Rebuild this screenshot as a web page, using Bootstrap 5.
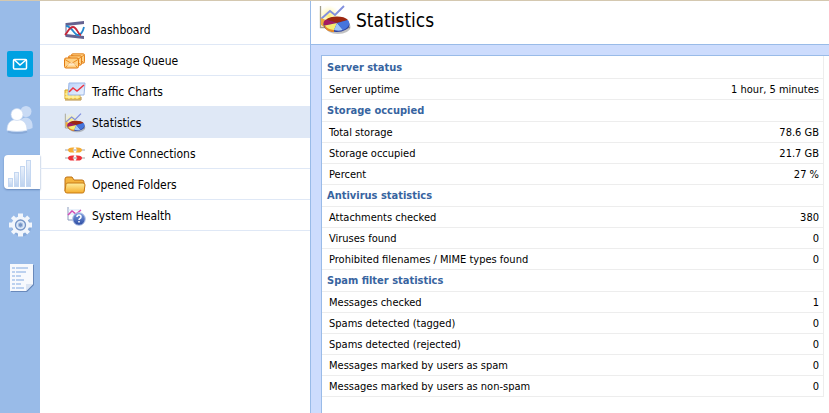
<!DOCTYPE html>
<html lang="en">
<head>
<meta charset="utf-8">
<meta name="viewport" content="width=device-width, initial-scale=1">
<title>Statistics</title>
<link href="https://cdn.jsdelivr.net/npm/bootstrap@5.3.0/dist/css/bootstrap.min.css" rel="stylesheet">
<style>
body{font-family:"DejaVu Sans Condensed","DejaVu Sans",Tahoma,sans-serif;font-stretch:condensed;font-size:12px;color:#000;background:#fff}
.app{border-top:1px solid #d4c8b0}
.rail{width:40px;background:#99bbe8;padding-top:46px}
.rail-btn{height:34px;margin-bottom:20px;border:0;border-radius:4px 0 0 4px;background:none;padding:0;width:36px}
.rail-btn.active{background:#fff;box-shadow:0 1px 2px #6688bb}
.side{width:270px;padding-top:13px}
.side .nav-link{height:31px;padding:2px 0 0 24px;gap:6px;color:#000;border-bottom:1px solid #dfe8f6}
.side .nav-link.active{background:#dfe8f6}
.main-pane{border-left:1px solid #99bbe8;background:#cddcfd}
.title-bar{height:44px;border-bottom:1px solid #99bbe8;padding:0 0 5px 8px;gap:5px}
.title-bar h1{font-size:19px;line-height:24px}
.panel-box{margin:10px 0 0 10px;border:solid #99bbe8;border-width:1px 0 0 1px;padding-right:5px}
.stats{font-size:11px;line-height:14px;border-right:1px solid #ededed}
.stats th,.stats td{height:21px;padding:2px 4px 0 7px;border-bottom:1px solid #ededed;font-weight:400;vertical-align:middle}
.stats .group th{height:22px;padding:2px 0 0 5px;color:#3764a0;font-weight:700}
</style>
<script src="https://cdn.jsdelivr.net/npm/bootstrap@5.3.0/dist/js/bootstrap.bundle.min.js"></script>
</head>
<body>
<svg width="0" height="0" class="position-absolute" aria-hidden="true">
<defs>
<linearGradient id="gold" x2="0" y2="1"><stop stop-color="#fff0a0"/><stop offset="1" stop-color="#f5ad2c"/></linearGradient>
<linearGradient id="bars" x2="0" y2="1"><stop stop-color="#eaf1fb"/><stop offset="1" stop-color="#bdd2ef"/></linearGradient>
<linearGradient id="sheet" x2="1" y2="1"><stop stop-color="#b9d2fa"/><stop offset="1" stop-color="#edf4ff"/></linearGradient>
<linearGradient id="orb" x2="0" y2="1"><stop stop-color="#7c9de0"/><stop offset="1" stop-color="#2b4aa0"/></linearGradient>
<radialGradient id="glow"><stop stop-color="#ffee70"/><stop offset="1" stop-color="#fff7c0" stop-opacity="0"/></radialGradient>
<symbol id="pie" viewBox="0 0 32 30">
<ellipse cx="10" cy="11" rx="11" ry="11" fill="url(#glow)"/>
<path d="M1.500 1v21.500H31" fill="none" stroke="#a3a08c" stroke-width="1.300"/>
<path d="M2 14l9-8 5 4 9-9" fill="none" stroke="#8290de" stroke-width="1.900"/>
<path d="M2 13l5 2 2 10-7-5z" fill="#efab3c"/>
<ellipse cx="19" cy="22" rx="12.500" ry="7" fill="#777" opacity=".45"/>
<ellipse cx="17.500" cy="19.500" rx="13" ry="7.500" fill="#2c3f9c"/>
<path d="M5 20c1 5 5 7 10 7v-5z" fill="#e78a28"/>
<path d="M18 18L7 14.500c5-4 18-4 22 .5z" fill="#9c2710"/>
<path d="M18 18L7 14.500c-3 2-3 4-1 6z" fill="#a61a62"/>
<path d="M18 18L6 20.500c2 3 5 4 9 4.500z" fill="#f5ec72"/>
<path d="M18 18l-3 7c3 1 6 1 9 0z" fill="#9ec6fa"/>
<path d="M18 18l6 7c5-2 8-6 5-10z" fill="#4675dc"/>
</symbol>
<symbol id="env" viewBox="0 0 15 11"><rect x=".5" y=".5" width="14" height="10" rx="1.500" fill="#ffd184" stroke="#e07910"/><path d="M1 2l6.500 4L14 2M1.500 10L6 5M13.500 10L9 5" fill="none" stroke="#e88a20"/><path d="M2 8l4-3h3l4 3z" fill="#fff" opacity=".5"/></symbol>
<symbol id="plug" viewBox="0 0 20 6"><path d="M0 3h20" stroke="#999" stroke-width=".9"/><path d="M9 .5q-6-.5-6 2.500t6 2.500L7.500 3zM11 .5q6-.5 6 2.500t-6 2.500L12.500 3z" fill="currentColor"/><path d="M9 .5L7.500 3 9 5.500M11 .5L12.500 3 11 5.500" fill="none" stroke="currentColor" opacity=".6"/></symbol>
</defs>
</svg>

<div class="app d-flex min-vh-100">
<nav class="rail d-flex flex-column align-items-end flex-shrink-0" aria-label="Sections">
<button class="rail-btn" type="button" aria-label="Mail"><svg class="d-block" width="36" height="34" viewBox="0 0 36 34"><rect x="3" y="4" width="26" height="26" rx="2" fill="#00a1e2"/><rect x="9.500" y="12.500" width="13" height="9.500" rx="1" fill="none" stroke="#fff" stroke-width="1.500"/><path d="M10 12.500l6 5.500 6.500-5.500" fill="none" stroke="#fff" stroke-width="1.500"/></svg></button>
<button class="rail-btn" type="button" aria-label="Users"><svg class="d-block" width="36" height="34" viewBox="0 0 36 34"><g fill="#c9dbf5"><circle cx="22" cy="10.500" r="5.500"/><path d="M14 27c0-14 16-14 14.500 0q-6 3-14.500 0z"/></g><path d="M4 30.500c6 2 13 2 19 0" stroke="#7898c8" stroke-width="2" fill="none" opacity=".5"/><g fill="#fff" stroke="#c8d9f0" stroke-width=".7"><path d="M3 29.500c0-7 3-11 10-11s10 4 10 11q-10 2-20 0z"/><circle cx="13" cy="13.500" r="6"/></g></svg></button>
<button class="rail-btn active" type="button" aria-label="Status"><svg class="d-block" width="36" height="34" viewBox="0 0 36 34"><g fill="url(#bars)" stroke="#c4d7f1"><rect x="4.500" y="23.500" width="4" height="8"/><rect x="10.500" y="17.500" width="4" height="14"/><rect x="16.500" y="11.500" width="4" height="20"/><rect x="22.500" y="5.500" width="4" height="26"/></g></svg></button>
<button class="rail-btn" type="button" aria-label="Configuration"><svg class="d-block" width="36" height="34" viewBox="0 0 36 34"><g transform="translate(16.500 16)"><circle cx="1" cy="1.500" r="10" fill="#7799cc" opacity=".5"/><g fill="#f2f6fc"><circle r="8.700"/><path d="M-2.500-11.500h5v23h-5zM-11.500-2.500h23v5h-23z"/><path transform="rotate(45)" d="M-2-11.500h4v23h-4zM-11.500-2h23v4h-23z"/></g><circle r="5" fill="#dce8f8" stroke="#7594c5" stroke-width="1.300"/><circle r="2.200" fill="#7594c5" stroke="#a9c0e3"/></g></svg></button>
<button class="rail-btn" type="button" aria-label="Logs"><svg class="d-block" width="36" height="34" viewBox="0 0 36 34"><path d="M7 2h23v20l-7 7H7z" fill="#6989bb"/><path d="M6 1h23v20l-7 7H6z" fill="#f7f9fd"/><path d="M29 21l-7 7v-7z" fill="#dce5f3"/><path d="M8 5h3m1 0h12M8 9h3m1 0h10M8 13h3m1 0h5M8 17h3m1 0h8M8 21h3m1 0h5M8 25h3m1 0h8" stroke="#bcd1ef" stroke-width="2"/></svg></button>
</nav>

<nav class="side nav flex-column flex-nowrap flex-shrink-0" aria-label="Status">
<a class="nav-link d-flex align-items-center" href="#"><svg width="22" height="20" viewBox="0 0 22 20"><path d="M2 3l18-2v3L2 6zM2 14l18 2v3L2 17z" fill="#656290"/><path d="M2 3v14" stroke="#656290"/><path d="M2 6c6 0 8 9 12 9q4 0 6-8" fill="none" stroke="#2388cf" stroke-width="1.800"/><path d="M1 15C4 12 5 7 9 7s5 8 8 8" fill="none" stroke="#c72539" stroke-width="1.800"/></svg>Dashboard</a>
<a class="nav-link d-flex align-items-center" href="#"><svg width="22" height="20" viewBox="0 0 22 20"><use href="#env" x="7" y="2" width="14" height="11"/><use href="#env" x="4" y="4" width="14" height="11"/><use href="#env" x="0" y="6" width="15" height="12"/></svg>Message Queue</a>
<a class="nav-link d-flex align-items-center" href="#"><svg width="22" height="20" viewBox="0 0 22 20"><path d="M1 8h15v9H1z" fill="#ffe16c" stroke="#d4a322"/><path d="M5 8v9m4-9v9m4-9v9M1 12h15M1 15h15" stroke="#fff4ae"/><path d="M1 18h16v-3" fill="none" stroke="#b78b38"/><path d="M5 1h16l-1 12H4z" fill="url(#sheet)" stroke="#9db7e5"/><path d="M5 10l4-4 4 3 7-6" fill="none" stroke="#ee3441" stroke-width="1.500"/></svg>Traffic Charts</a>
<a class="nav-link active d-flex align-items-center" href="#" aria-current="page"><svg width="22" height="20"><use href="#pie" width="22" height="20"/></svg>Statistics</a>
<a class="nav-link d-flex align-items-center" href="#"><svg width="22" height="20" viewBox="0 0 22 20"><use href="#plug" x="1" y="3" width="20" height="6" color="#f5ac35"/><use href="#plug" x="1" y="11" width="20" height="6" color="#ee3038"/></svg>Active Connections</a>
<a class="nav-link d-flex align-items-center" href="#"><svg width="22" height="20" viewBox="0 0 22 20"><path d="M1 16V4q0-2 2-2h5l2 3h8q2 0 2 2v9z" fill="#f4b43e" stroke="#bd7015"/><path d="M1 16l1-7q0-1 2-1h15q2 0 2 2l-1 7q0 1-2 1H3q-2 0-2-2z" fill="url(#gold)" stroke="#c77b16"/></svg>Opened Folders</a>
<a class="nav-link d-flex align-items-center" href="#"><svg width="22" height="20" viewBox="0 0 22 20"><path d="M4 1v13h12" fill="none" stroke="#8a9abd"/><path d="M4 4h13M4 8h13" stroke="#d3e3f5"/><path d="M4 9l4-4 4 3 5-4" fill="none" stroke="#d34bb5" stroke-width="1.500"/><circle cx="15" cy="13" r="6.300" fill="url(#orb)" stroke="#b8c7e8"/><path d="M13 11q0-2 2-2t2 2q0 1-1 1.500t-1 1.500m0 1v1.500" fill="none" stroke="#fff" stroke-width="1.500"/></svg>System Health</a>
</nav>

<main class="main-pane d-flex flex-column flex-grow-1">
<header class="title-bar d-flex align-items-center bg-white"><svg width="32" height="30"><use href="#pie" width="32" height="30"/></svg><h1 class="m-0 fw-normal">Statistics</h1></header>
<div class="panel-box flex-grow-1 bg-white">
<table class="stats w-100">
<tbody>
<tr class="group"><th colspan="2" scope="colgroup">Server status</th></tr>
<tr><th scope="row">Server uptime</th><td class="text-end">1 hour, 5 minutes</td></tr>
<tr class="group"><th colspan="2" scope="colgroup">Storage occupied</th></tr>
<tr><th scope="row">Total storage</th><td class="text-end">78.6 GB</td></tr>
<tr><th scope="row">Storage occupied</th><td class="text-end">21.7 GB</td></tr>
<tr><th scope="row">Percent</th><td class="text-end">27 %</td></tr>
<tr class="group"><th colspan="2" scope="colgroup">Antivirus statistics</th></tr>
<tr><th scope="row">Attachments checked</th><td class="text-end">380</td></tr>
<tr><th scope="row">Viruses found</th><td class="text-end">0</td></tr>
<tr><th scope="row">Prohibited filenames / MIME types found</th><td class="text-end">0</td></tr>
<tr class="group"><th colspan="2" scope="colgroup">Spam filter statistics</th></tr>
<tr><th scope="row">Messages checked</th><td class="text-end">1</td></tr>
<tr><th scope="row">Spams detected (tagged)</th><td class="text-end">0</td></tr>
<tr><th scope="row">Spams detected (rejected)</th><td class="text-end">0</td></tr>
<tr><th scope="row">Messages marked by users as spam</th><td class="text-end">0</td></tr>
<tr><th scope="row">Messages marked by users as non-spam</th><td class="text-end">0</td></tr>
</tbody>
</table>
</div>
</main>
</div>
</body>
</html>
